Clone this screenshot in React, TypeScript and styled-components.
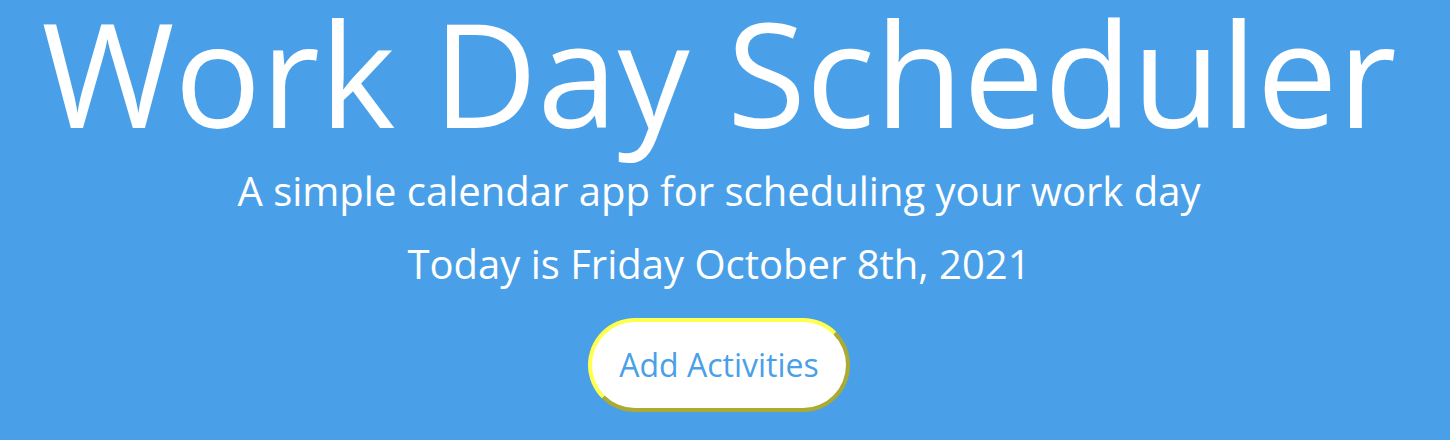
import React from "react";
import styled, { createGlobalStyle } from "styled-components";

const GlobalStyle = createGlobalStyle`
    html, body {
        margin: 0;
        padding: 0;
        background-color: #4aa0e8;
    }
`;

const Jumbotron = styled.header`
    height: 440px;
    box-sizing: border-box;
    padding-right: 12px;
    display: flex;
    flex-direction: column;
    align-items: center;
    background-color: #4aa0e8;
    color: white;
    font-family: "Open Sans", sans-serif;
    text-align: center;
    overflow: hidden;
`;

const Title = styled.h1`
    margin: -14px 0 0;
    font-size: 144px;
    font-weight: 400;
    line-height: 1.2;
    white-space: nowrap;
`;

const Lead = styled.p<{ $gap: number }>`
    margin: ${(p) => p.$gap}px 0 0;
    font-size: 40px;
    font-weight: 400;
    line-height: 1.2;
    white-space: nowrap;
`;

const AddButton = styled.button`
    margin-top: 30px;
    width: 262px;
    height: 94px;
    border: 4px outset #ffff4d;
    border-radius: 47px;
    background-color: white;
    color: #4aa0e8;
    font-family: "Open Sans", sans-serif;
    font-size: 32px;
    cursor: pointer;
`;

export default function App() {
    return (
        <>
            <GlobalStyle />
            <Jumbotron>
                <Title>Work Day Scheduler</Title>
                <Lead $gap={8}>A simple calendar app for scheduling your work day</Lead>
                <Lead $gap={25}>Today is Friday October 8th, 2021</Lead>
                <AddButton>Add Activities</AddButton>
            </Jumbotron>
        </>
    );
}
